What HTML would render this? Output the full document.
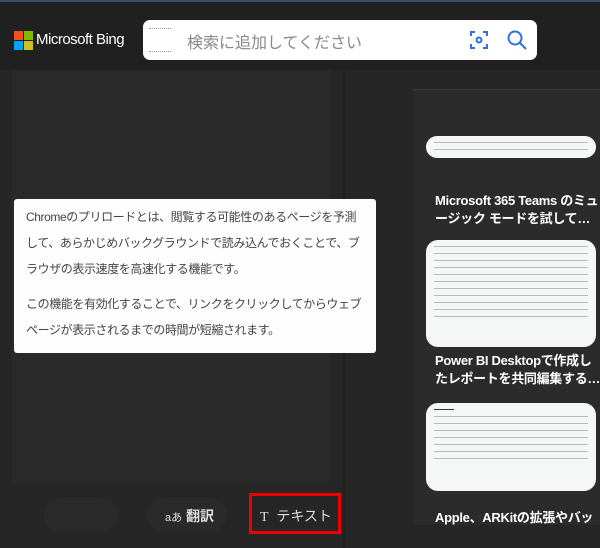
<!DOCTYPE html>
<html><head><meta charset="utf-8"><style>
*{margin:0;padding:0;box-sizing:border-box}
body{width:600px;height:548px;background:#262626;font-family:"Liberation Sans","Noto Sans CJK JP",sans-serif;position:relative;overflow:hidden}
.top{position:absolute;left:0;top:0;width:600px;height:70px;background:#202020;border-top:2px solid #3a4a6a}
.logo{position:absolute;left:14px;top:29px;width:19px;height:19px}
.logo i{position:absolute;width:9px;height:9px}
.brand{position:absolute;left:36px;top:29px;color:#fff;font-size:15px;letter-spacing:-0.5px}
.search{position:absolute;left:143px;top:18px;width:394px;height:40px;background:#fff;border-radius:7px}
.ph{position:absolute;left:44px;top:9px;font-size:16px;color:#888}
.lp{position:absolute;left:12px;top:70px;width:318px;height:414px;background:#2a2a2a;border-radius:0 0 6px 6px}
.div{position:absolute;left:343px;top:70px;width:2px;height:478px;background:#222}
.card{position:absolute;left:14px;top:199px;width:362px;height:154px;background:#fdfdfd;border-radius:3px;padding:5px 0 0 12px;color:#444;font-size:12px;line-height:26px;letter-spacing:-0.4px;white-space:nowrap}
.rp{position:absolute;left:413px;top:89px;width:190px;height:436px;background:#2b2b2b;border-top:1px solid #383838}
.t{position:absolute;left:22px;color:#fff;font-size:13px;line-height:18px;font-weight:bold;letter-spacing:-0.3px}
.img{position:absolute;left:13px;width:170px;background:#f5f6f6;border-radius:12px;overflow:hidden}
.lines div{height:1px;background:#bbb;margin:6px 8px}
.btn{position:absolute;top:497px;height:35px;border-radius:18px;background:#2a2a2a;color:#ddd;font-size:14px}
.red{position:absolute;left:249px;top:493px;width:92px;height:41px;border:3px solid #e00}
</style></head><body>
<div class="top">
<div class="logo"><i style="left:0;top:0;background:#f25022"></i><i style="left:10px;top:0;background:#7fba00"></i><i style="left:0;top:10px;background:#00a4ef"></i><i style="left:10px;top:10px;background:#c8c025"></i></div>
<div class="brand">Microsoft Bing</div>
<div class="search">
<div style="position:absolute;left:6px;top:8px;width:22px;height:24px;border-top:1px dotted #999;border-bottom:1px dotted #999"></div>
<div class="ph">検索に追加してください</div>
<svg style="position:absolute;left:326px;top:10px" width="20" height="20" viewBox="0 0 20 20" fill="none" stroke="#2f6fe0" stroke-width="2"><path d="M2 6V2h4M14 2h4v4M18 14v4h-4M6 18H2v-4"/><circle cx="10" cy="10" r="2.5"/></svg>
<svg style="position:absolute;left:363px;top:9px" width="22" height="22" viewBox="0 0 22 22" fill="none" stroke="#2f6fe0" stroke-width="2"><circle cx="9" cy="9" r="6.5"/><path d="M14 14l6 6"/></svg>
</div>
</div>
<div class="lp"></div>
<div class="div"></div>
<div class="card">Chromeのプリロードとは、閲覧する可能性のあるページを予測<br>して、あらかじめバックグラウンドで読み込んでおくことで、ブ<br>ラウザの表示速度を高速化する機能です。<div style="margin-top:9px">この機能を有効化することで、リンクをクリックしてからウェブ<br>ページが表示されるまでの時間が短縮されます。</div></div>
<div class="rp">
<div class="img lines" style="top:46px;height:22px"><div></div><div></div></div>
<div class="t" style="top:102px">Microsoft 365 Teams のミュ<br>ージック モードを試して…</div>
<div class="img lines" style="top:150px;height:107px"><div></div><div></div><div></div><div></div><div></div><div></div><div></div><div></div><div></div><div></div><div></div></div>
<div class="t" style="top:262px">Power BI Desktopで作成し<br>たレポートを共同編集する…</div>
<div class="img lines" style="top:313px;height:88px"><div style="width:20px;background:#333"></div><div></div><div></div><div></div><div></div><div></div><div></div><div></div></div>
<div class="t" style="top:419px">Apple、ARKitの拡張やバッ</div>
</div>
<div class="btn" style="left:44px;width:74px"></div>
<div class="btn" style="left:147px;width:80px;padding:9px 0 0 18px"><span style="font-size:11px">aあ</span> <b>翻訳</b></div>
<div class="btn" style="left:252px;width:86px;padding:9px 0 0 8px;background:none"><span style="font-family:'Liberation Serif',serif">T</span>&nbsp; テキスト</div>
<div class="red"></div>
</body></html>
